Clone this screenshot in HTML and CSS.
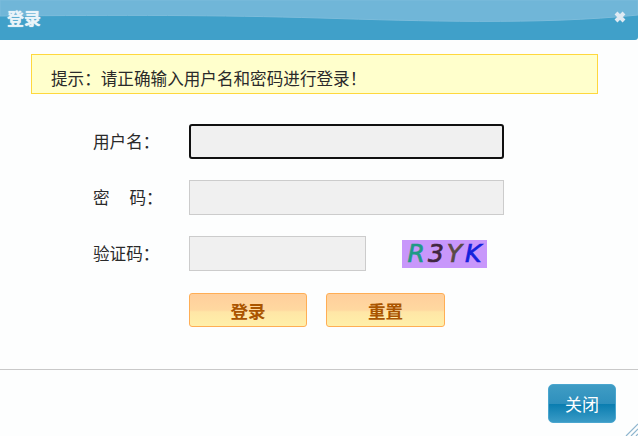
FILE: index.html
```html
<!DOCTYPE html>
<html lang="zh-CN">
<head>
    <meta charset="UTF-8">
    <title>登录</title>
    <link rel="stylesheet" href="styles.css">
</head>
<body>
    <div class="dialog">
        <div class="title-bar">
            <svg class="wave" width="638" height="40" viewBox="0 0 638 40" preserveAspectRatio="none">
                <path d="M0 16 C120 15 220 15 320 18 C420 21 540 25 638 15 L638 0 L0 0 Z" fill="#70b6d8" stroke="#7cbcdb" stroke-width="1"/>
            </svg>
            <span class="title">登录</span>
            <svg class="close" width="12" height="12" viewBox="0 0 12 12">
                <path d="M2 2 L10 10 M10 2 L2 10" stroke="#dfeaf3" stroke-width="4" fill="none"/>
            </svg>
        </div>
        <div class="content">
            <div class="tip">提示&#xFF1A;请正确输入用户名和密码进行登录&#xFF01;</div>
            <form class="login-form">
                <label class="field-label">用户名&#xFF1A;</label>
                <input class="field field-active" type="text">
                <label class="field-label">密&emsp;&#x2009;码&#xFF1A;</label>
                <input class="field" type="password">
                <label class="field-label">验证码&#xFF1A;</label>
                <div class="captcha-row">
                    <input class="field field-short" type="text">
                    <div class="captcha"><span class="c1">R</span><span class="c2">3</span><span class="c3">Y</span><span class="c4">K</span></div>
                </div>
                <div class="actions">
                    <button class="btn-orange" type="button">登录</button>
                    <button class="btn-orange btn-reset" type="button">重置</button>
                </div>
            </form>
        </div>
        <div class="footer">
            <button class="btn-blue" type="button">关闭</button>
            <svg class="resize" width="14" height="14" viewBox="0 0 14 14">
                <path d="M14 2 L2 14 M14 7 L7 14 M14 12 L12 14" stroke="#8fb6cf" stroke-width="1.2" fill="none"/>
            </svg>
        </div>
    </div>
</body>
</html>
```

FILE: styles.css
```css
* {
    box-sizing: border-box;
}

body {
    margin: 0;
    background-color: #fff;
    font-family: "Liberation Sans", "Noto Sans CJK SC", sans-serif;
    color: #333;
}

.dialog {
    display: flex;
    flex-direction: column;
    width: 638px;
    height: 436px;
    overflow: hidden;
    background-color: #fdfefe;
}

/* Title bar */
.title-bar {
    position: relative;
    display: flex;
    justify-content: space-between;
    align-items: center;
    flex: 0 0 40px;
    padding: 0 12px 6px 7px;
    background-color: #40a0c9;
    border-radius: 0 0 3px 0;
}

.wave {
    position: absolute;
    top: 0;
    left: 0;
}

.title {
    position: relative;
    font-size: 17px;
    font-weight: bold;
    color: #eaf4f9;
    text-shadow: 0 0 1px #eaf4f9;
}

.close {
    position: relative;
}

/* Main content */
.content {
    flex: 1;
    padding: 14px 40px 0 31px;
}

.tip {
    height: 40px;
    padding: 13px 0 0 19px;
    border: 1px solid #ffd83d;
    background-color: #ffffcc;
    font-size: 16.6px;
    line-height: 24px;
    color: #2a2a2a;
}

.login-form {
    display: grid;
    grid-template-columns: 96px 1fr;
    row-gap: 21px;
    align-items: center;
    margin: 30px 0 0 62px;
}

.field-label {
    margin-top: -2px;
    font-size: 16.6px;
    color: #2a2a2a;
}

.field {
    width: 315px;
    height: 35px;
    border: 1px solid #ccc;
    background-color: #f0f0f0;
    outline: none;
}

.field-active {
    border: 2px solid #101010;
    border-radius: 3px;
}

.field-short {
    width: 177px;
}

.captcha-row {
    display: flex;
    align-items: center;
    gap: 36px;
}

.captcha {
    display: flex;
    justify-content: center;
    gap: 3px;
    width: 85px;
    height: 28px;
    background-color: #c897fb;
    font-family: "DejaVu Sans", sans-serif;
    font-size: 25px;
    font-style: italic;
    line-height: 28px;
    -webkit-text-stroke: 0.7px;
}

.c1 {
    color: #1f9a86;
}

.c2 {
    color: #40263f;
}

.c3 {
    color: #5a4a45;
}

.c4 {
    color: #1422dc;
}

.actions {
    grid-column: 2;
    display: flex;
    gap: 19px;
    margin-top: 1px;
}

.btn-orange {
    width: 118px;
    height: 34px;
    padding: 0;
    border: 1px solid #ffae55;
    border-radius: 3px;
    background: linear-gradient(#ffcf9c, #ffd8a0 50%, #ffe6a6 56%, #fff0aa);
    font-family: inherit;
    font-size: 17.5px;
    font-weight: bold;
    color: #aa5500;
}

.btn-reset {
    width: 119px;
}

/* Footer */
.footer {
    position: relative;
    display: flex;
    justify-content: flex-end;
    flex: 0 0 67px;
    padding: 14px 22px 0 0;
    border-top: 1px solid #c9c9c9;
}

.btn-blue {
    width: 68px;
    height: 39px;
    padding: 0;
    border: 1px solid #4aa6cf;
    border-radius: 5px;
    background: linear-gradient(#3f9cc4, #2f90bd 50%, #0a7db0 52%, #3a9bc6);
    font-family: inherit;
    font-size: 17px;
    color: #fff;
}

.resize {
    position: absolute;
    right: 0;
    bottom: 0;
}
```
